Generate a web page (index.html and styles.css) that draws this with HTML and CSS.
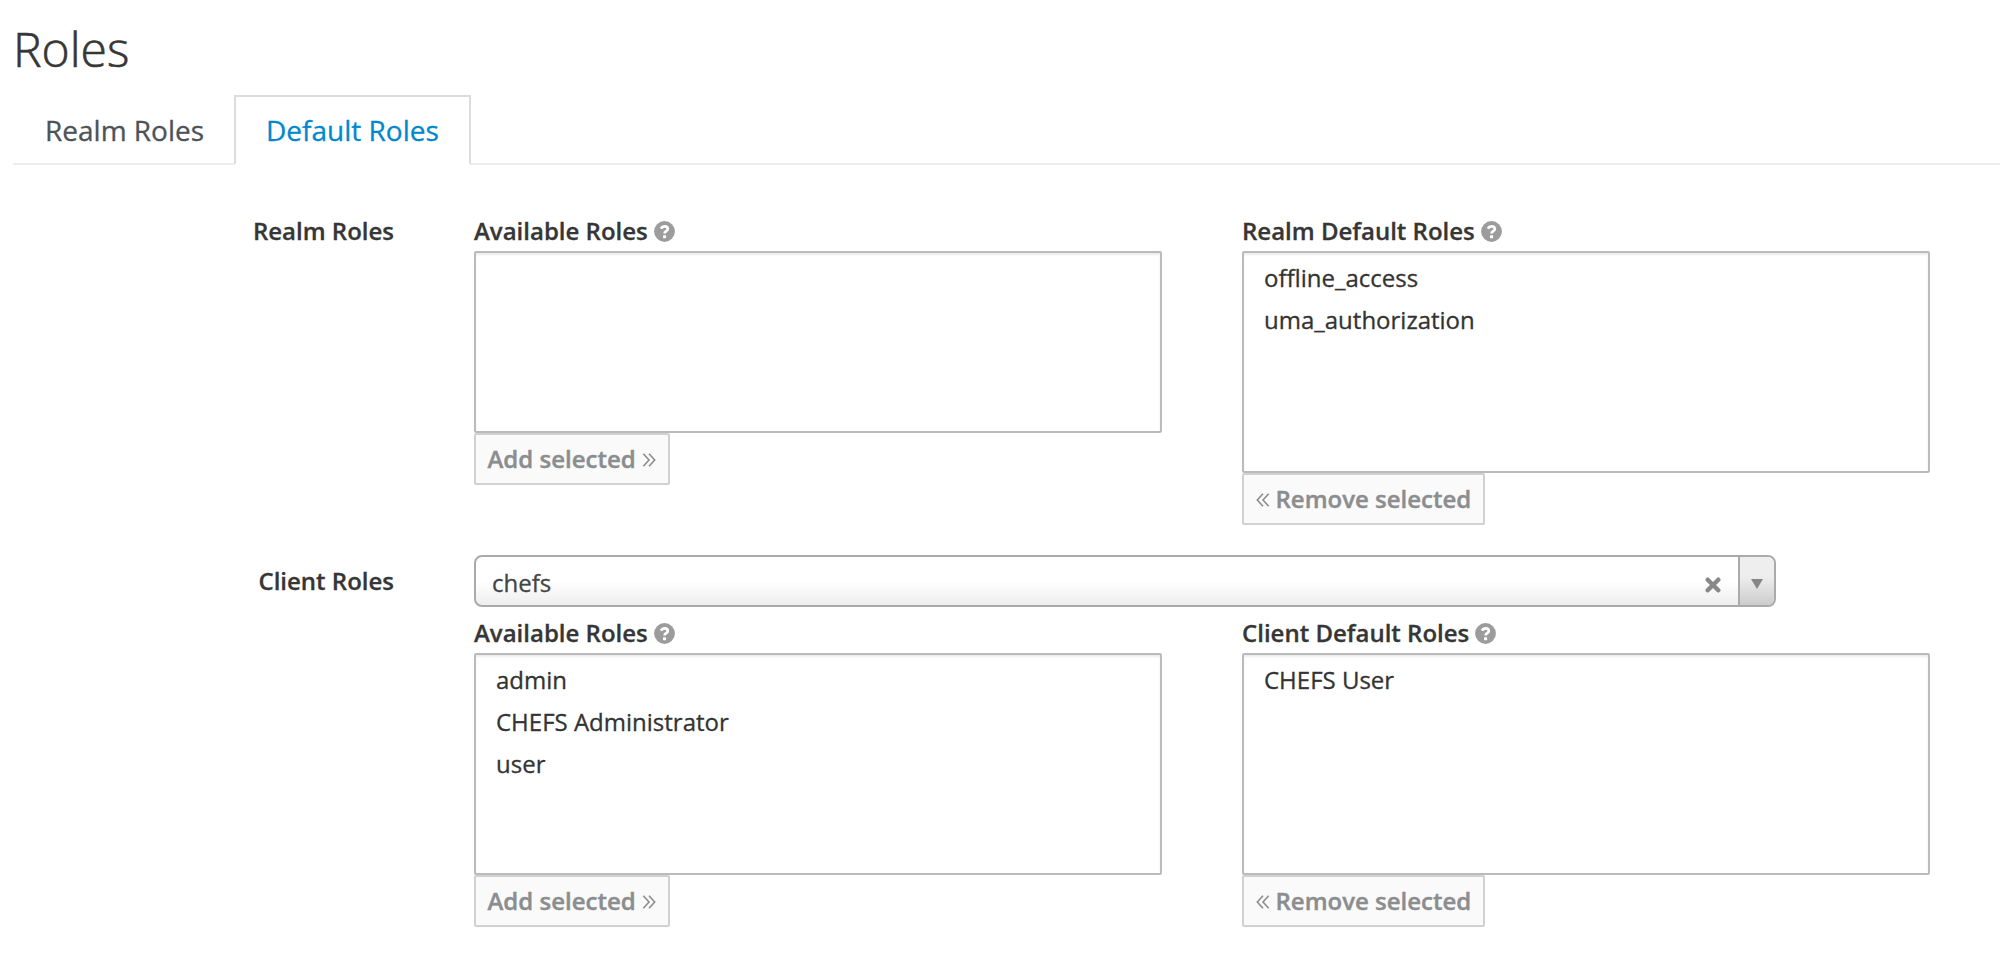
FILE: index.html
```html
<!DOCTYPE html>
<html lang="en">
<head>
<meta charset="utf-8">
<title>Roles</title>
<link rel="stylesheet" href="styles.css">
</head>
<body>
<svg class="defs" aria-hidden="true">
  <symbol id="help" viewBox="0 0 21 21">
    <circle cx="10.5" cy="10.5" r="10.4" fill="#9c9c9c"/>
    <path d="M6.9 7.7C7.8 6.1 9 5.3 10.6 5.3c1.900 0 3.200 1.100 3.200 2.600 0 2.400-3.200 2.200-3.200 4.600" fill="none" stroke="#fff" stroke-width="2.700"/>
    <rect x="9" y="14.300" width="3.100" height="2.900" rx=".4" fill="#fff"/>
  </symbol>
  <symbol id="right" viewBox="0 0 14 14">
    <path d="M1.300 .7 7 7 1.300 13.300M7 .7 12.700 7 7 13.300" fill="none" stroke="#8b8d8f" stroke-width="1.600"/>
  </symbol>
  <symbol id="left" viewBox="0 0 14 14">
    <path d="M12.700 .7 7 7 12.700 13.300M7 .7 1.300 7 7 13.300" fill="none" stroke="#8b8d8f" stroke-width="1.600"/>
  </symbol>
</svg>
<main class="page">
  <h1 class="title">Roles</h1>
  <nav class="tabs">
    <a class="tab">Realm Roles</a>
    <a class="tab active">Default Roles</a>
  </nav>
  <section class="group realm">
    <div class="group-label">Realm Roles</div>
    <div class="columns">
      <div class="column">
        <div class="label">Available Roles<svg class="help"><use href="#help"/></svg></div>
        <div class="list short"></div>
        <button class="btn" disabled><span>Add selected</span><svg class="angle"><use href="#right"/></svg></button>
      </div>
      <div class="column">
        <div class="label">Realm Default Roles<svg class="help"><use href="#help"/></svg></div>
        <div class="list"><div class="option">offline_access</div><div class="option">uma_authorization</div></div>
        <button class="btn" disabled><svg class="angle"><use href="#left"/></svg><span>Remove selected</span></button>
      </div>
    </div>
  </section>
  <section class="group client">
    <div class="group-label">Client Roles</div>
    <div>
      <div class="select">
        <span class="value">chefs</span>
        <svg class="clear" viewBox="0 0 16 16"><path d="M2.700 2.700 13.300 13.300M13.300 2.700 2.700 13.300" stroke="#888" stroke-width="4.400" stroke-linecap="round"/></svg>
        <span class="arrow"><svg class="caret" viewBox="0 0 12 10"><path d="M0 0h12L6 10z" fill="#868686"/></svg></span>
      </div>
      <div class="columns">
        <div class="column">
          <div class="label">Available Roles<svg class="help"><use href="#help"/></svg></div>
          <div class="list"><div class="option">admin</div><div class="option">CHEFS Administrator</div><div class="option">user</div></div>
          <button class="btn" disabled><span>Add selected</span><svg class="angle"><use href="#right"/></svg></button>
        </div>
        <div class="column">
          <div class="label">Client Default Roles<svg class="help"><use href="#help"/></svg></div>
          <div class="list"><div class="option">CHEFS User</div></div>
          <button class="btn" disabled><svg class="angle"><use href="#left"/></svg><span>Remove selected</span></button>
        </div>
      </div>
    </div>
  </section>
</main>
</body>
</html>
```
FILE: styles.css
```css
* { box-sizing: border-box; }
body {
  margin: 0;
  background: #fff;
  color: #363636;
  font: 24px/40px "Open Sans", sans-serif;
  -webkit-text-stroke: .3px;
}
.defs { display: none; }
.page { height: 968px; padding: 21px 0 0 13px; overflow: hidden; }
.title {
  margin: 0 0 18px;
  font-size: 48px;
  line-height: 56px;
  font-weight: 300;
  -webkit-text-stroke: .6px;
}
.tabs {
  display: flex;
  height: 70px;
  box-shadow: inset 0 -2px #ececec;
}
.tab {
  width: 221px;
  padding-left: 32px;
  font-size: 28px;
  line-height: 70px;
  color: #4d5258;
  white-space: nowrap;
}
.tab.active {
  width: 237px;
  padding-left: 30px;
  line-height: 66px;
  border: 2px solid #dcdcdc;
  border-bottom: 2px solid #fff;
  background: #fff;
  color: #0088ce;
}
.group { display: grid; grid-template-columns: 381px 1fr; column-gap: 80px; }
.realm { padding-top: 46px; }
.client { padding-top: 30px; }
.group-label { text-align: right; font-weight: 600; }
.client .group-label { padding-top: 6px; }
.columns { display: grid; grid-template-columns: 688px 688px; column-gap: 80px; }
.label { display: flex; align-items: center; gap: 6px; height: 40px; font-weight: 600; white-space: nowrap; }
.help { width: 21px; height: 21px; }
.list {
  height: 222px;
  padding: 4px 20px;
  border: 2px solid #bbb;
  border-radius: 2px;
  box-shadow: inset 0 2px 2px rgba(3, 3, 3, .075);
}
.list.short { height: 182px; }
.option { line-height: 42px; color: #333; }
.btn {
  display: flex;
  align-items: center;
  gap: 6px;
  height: 52px;
  padding: 0 12px 0 11.500px;
  border: 2px solid #d1d1d1;
  border-radius: 2px;
  background: #fafafa;
  color: #8b8d8f;
  font: 600 24px/48px "Open Sans", sans-serif;
  -webkit-text-stroke: .4px;
}
.angle { width: 14px; height: 14px; margin-top: 2px; }
.select {
  display: flex;
  align-items: center;
  width: 1302px;
  height: 52px;
  margin-bottom: 6px;
  padding-left: 16px;
  border: 2px solid #aaa;
  border-radius: 8px;
  background: linear-gradient(to top, #eee 0%, #fff 50%);
  overflow: hidden;
  color: #444;
}
.value { flex: 1; line-height: 48px; padding-top: 3px; }
.clear { width: 16px; height: 16px; margin: 7px 17px 0 0; }
.arrow {
  display: flex;
  align-items: center;
  justify-content: center;
  width: 36px;
  height: 48px;
  border-left: 2px solid #aaa;
  border-radius: 0 6px 6px 0;
  background: linear-gradient(to top, #ccc 0%, #eee 60%);
}
.caret { width: 12px; height: 10px; margin-top: 5px; }
```
